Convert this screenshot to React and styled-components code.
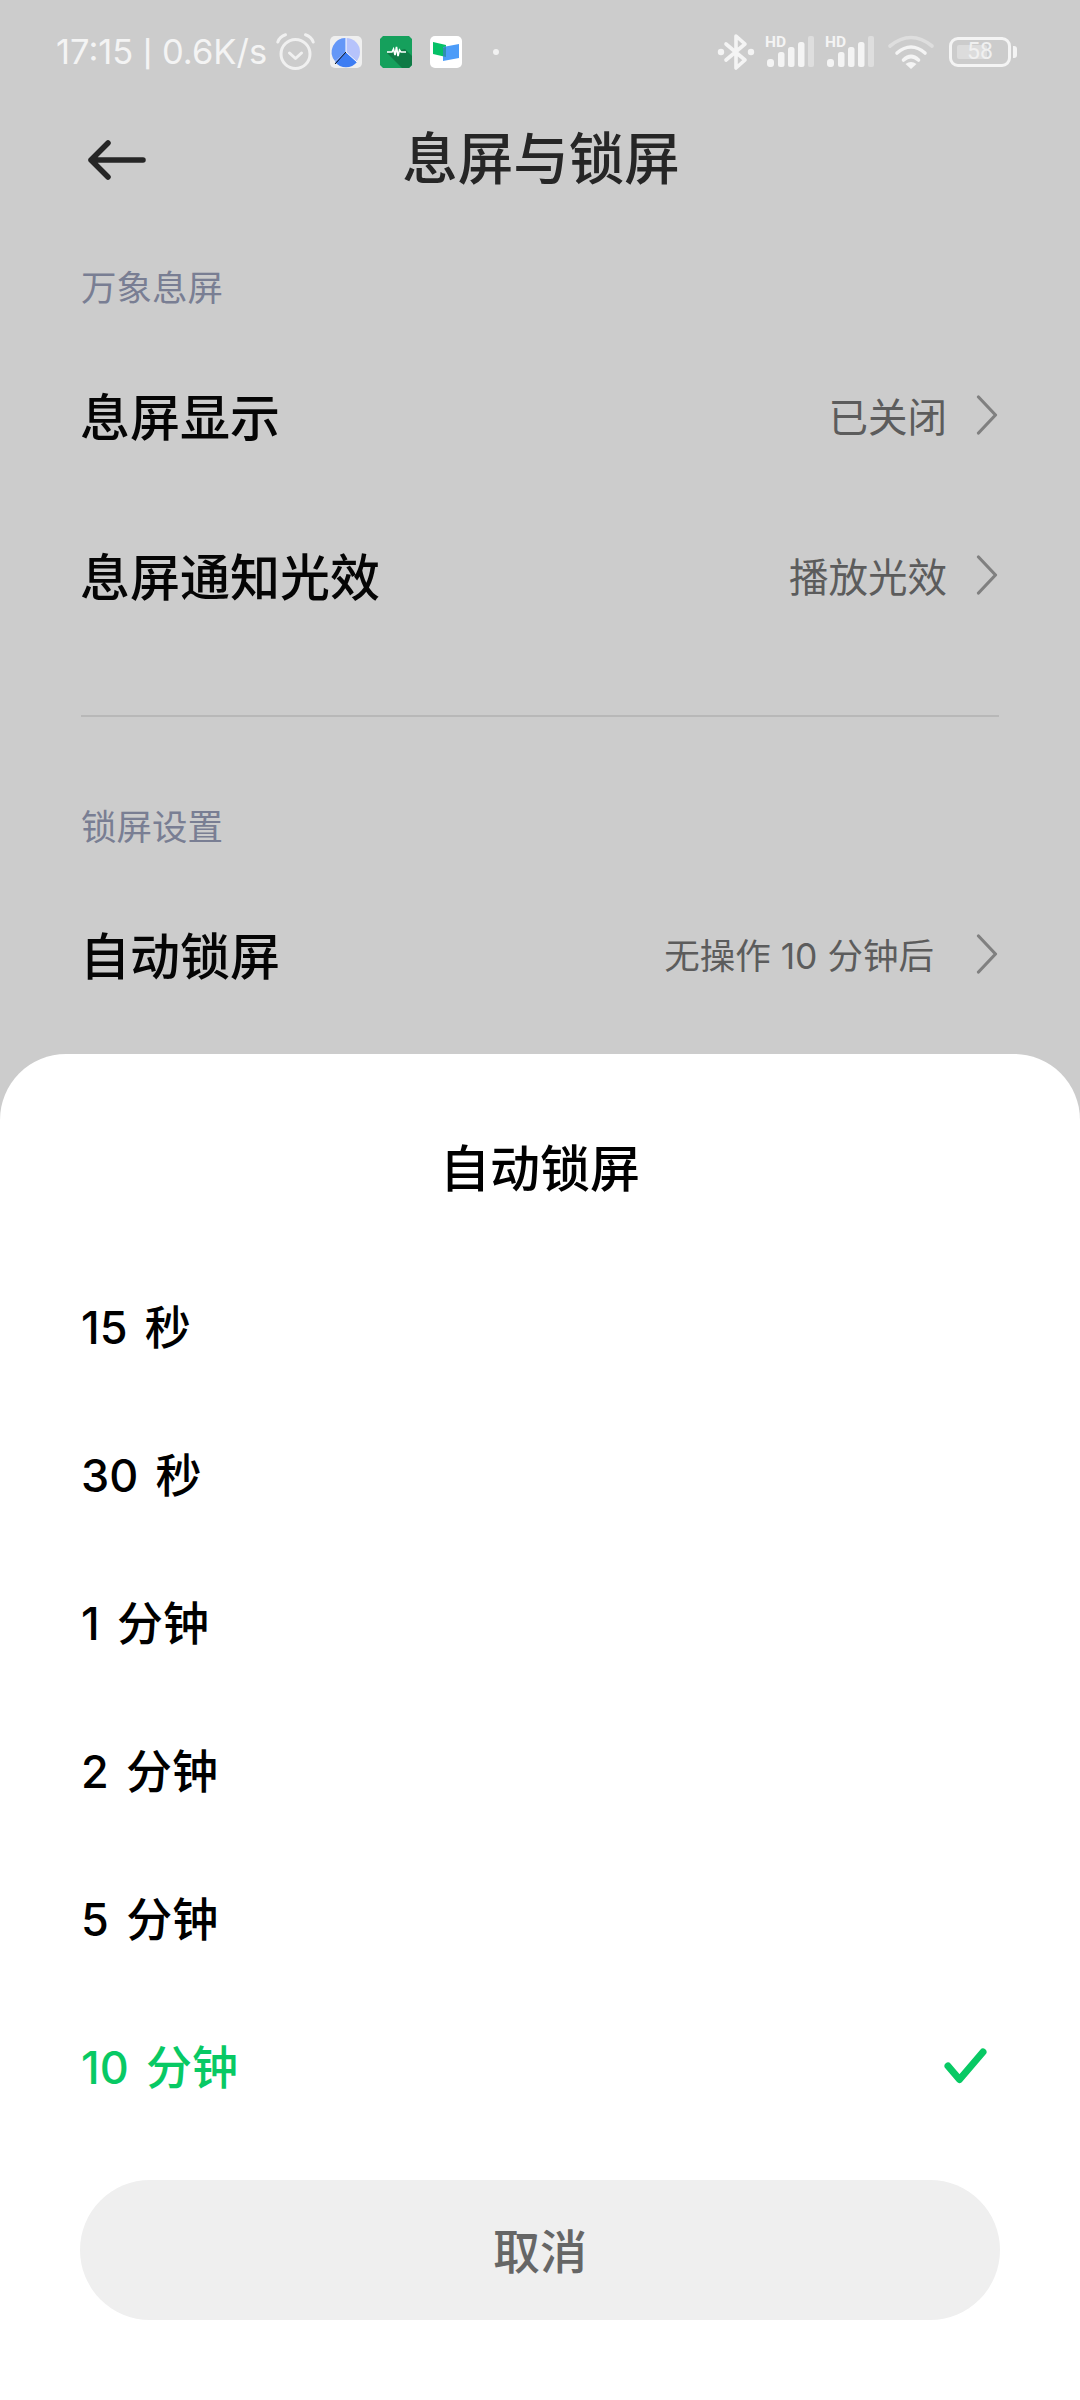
import React from "react";
import styled, { createGlobalStyle } from "styled-components";

const Global = createGlobalStyle`
  html, body { margin: 0; padding: 0; background: #ccc; }
  * { box-sizing: border-box; }
`;
const FONT = `"Noto Sans CJK SC", "Noto Sans", sans-serif`;
const MIXED = `"Inter", "Noto Sans CJK SC", sans-serif`;

const Page = styled.div`
  position: relative; width: 1080px; height: 2400px; overflow: hidden;
  background: #cccccc; font-family: ${FONT};
`;
const StatusBar = styled.div`
  height: 104px; padding: 0 63px 0 56px; display: flex; align-items: center; justify-content: space-between;
`;
const StatusGroup = styled.div`display: flex; align-items: center;`;
const StatusText = styled.span`
  font-family: "Inter", sans-serif; font-size: 34.5px; line-height: 40px; color: #f4f4f4; white-space: nowrap;
`;
const StatusSeparator = styled.span`font-family: "Roboto", sans-serif; font-size: 37px; font-weight: 500; line-height: 40px;`;
const AppIcon = styled.svg`display: block; flex: none; overflow: visible; margin-left: ${p => p.$ml || 0}px;`;
const Header = styled.div`height: 106px; padding: 0 86px 0 88px; display: flex; align-items: center;`;
const HeaderSide = styled.div`width: 58px; flex: none; display: flex; padding-top: ${p => p.$top || 0}px;`;
const HeaderTitle = styled.div`
  flex: 1; text-align: center; font-size: 55.5px; font-weight: 500; line-height: 70px; color: #262626; padding-bottom: 5px;
`;
const Section = styled.section`padding: ${p => p.$top}px 0 0;`;
const SectionLabel = styled.div`
  padding: 0 81px; margin-bottom: 18px; font-size: 35.5px; line-height: 60px; color: #797e93;
`;
const Row = styled.div`
  height: 160px; padding: 0 82px 0 80px; display: flex; align-items: center; justify-content: space-between;
`;
const RowTitle = styled.div`font-size: 50px; font-weight: 500; color: #050505; line-height: 70px;`;
const RowValue = styled.div`display: flex; align-items: center; gap: ${p => p.$gap}px; font-size: ${p => p.$size}px; color: #5c5c5c; font-family: ${MIXED};`;
const Divider = styled.div`height: 2px; margin: 61px 81px 0; background: #b8b8b8;`;

const Sheet = styled.div`
  position: absolute; left: 0; right: 0; bottom: 0; height: 1346px; background: #fff;
  border-radius: 66px 66px 0 0; padding: 0 80px;
`;
const SheetTitle = styled.div`
  height: 198px; padding-top: 78px; text-align: center;
  font-size: 50px; line-height: 66px; font-weight: 500; color: #000;
`;
const OptionList = styled.div`display: flex; flex-direction: column;`;
const Option = styled.div`
  height: 148px; display: flex; align-items: center; justify-content: space-between;
  color: ${p => (p.$active ? "#08c964" : "#000")};
  padding-left: 1px; padding-right: 13px;
`;
const OptionLabel = styled.div`font-size: 46px; word-spacing: 7px; line-height: 60px; white-space: nowrap;`;
const OptionNumber = styled.span`font-family: "Inter", sans-serif; font-size: 45px; font-weight: 500;`;
const OptionUnit = styled.span`font-weight: 500;`;
const CancelButton = styled.div`
  margin-top: 40px; height: 140px; border-radius: 70px; background: #efefef;
  display: flex; align-items: center; justify-content: center; padding-bottom: 4px;
  font-size: 47px; font-weight: 500; color: #666;
`;
const ChevronIcon = styled.svg`display: block; flex: none; margin-top: 2px;`;

const Chevron = () => (
  <ChevronIcon width="22" height="40" viewBox="0 0 22 40" fill="none"><path d="M2.5 2 L19.5 20 L2.5 38" stroke="#808080" strokeWidth="3.2" strokeLinecap="round" strokeLinejoin="round" /></ChevronIcon>
);
const Back = () => (
  <svg width="58" height="40" viewBox="0 0 58 40" fill="none"><path d="M20 3 L3 20 L20 37 M3 20 H55" stroke="#262626" strokeWidth="5.5" strokeLinecap="round" strokeLinejoin="round" /></svg>
);
const Alarm = () => (
  <AppIcon $ml={9} width="39" height="38" viewBox="0 0 39 38" fill="none" stroke="#f0f0f0">
    <circle cx="19.5" cy="21" r="14.5" strokeWidth="3" />
    <path d="M13.5 20 L19.5 25.5 L25.5 20" strokeWidth="3" strokeLinecap="round" strokeLinejoin="round" />
    <path d="M1.8 9 Q4 3.5 9.5 1.8 M29.5 1.8 Q35 3.5 37.2 9" strokeWidth="3" strokeLinecap="round" />
  </AppIcon>
);
const ClockApp = () => (
  <AppIcon $ml={15} width="32" height="32" viewBox="0 0 32 32">
    <rect width="32" height="32" rx="5" fill="#efefef" />
    <circle cx="16" cy="16" r="14" fill="#b6c3fb" />
    <path d="M16 16 L16 2 A14 14 0 0 0 5 25 Z" fill="#6497f7" />
    <path d="M16 16 L5 26 A14 14 0 0 0 27 26 Z" fill="#3d7df3" />
    <path d="M16 2 V16 L27 26" stroke="#fff" strokeWidth="1" fill="none" />
    <path d="M16 16 L5 28" stroke="#111" strokeWidth="1" fill="none" />
  </AppIcon>
);
const PulseApp = () => (
  <AppIcon $ml={18} width="32" height="32" viewBox="0 0 32 32">
    <path d="M3 0 H29 L32 3 V29 L29 32 H3 L0 29 V3 Z" fill="#15a05c" />
    <path d="M7 17 L25 13 L32 20 V29 L29 32 H22 Z" fill="#0e7a45" />
    <path d="M7 16 H12 L13.5 13 L15 19 L16.5 11 L18 20 L19.5 14 L21 16 H26" stroke="#fff" strokeWidth="1.6" fill="none" />
  </AppIcon>
);
const BookApp = () => (
  <AppIcon $ml={18} width="32" height="32" viewBox="0 0 32 32">
    <rect width="32" height="32" rx="5" fill="#fff" />
    <path d="M3 6 L16 9 V21 L3 18 Z" fill="#06c167" />
    <path d="M13 11 L29 8 V22 L13 25 Z" fill="#4c9cf8" />
    <path d="M13 11.5 L16 11 V21 L13 20.3 Z" fill="#2f8fb0" />
  </AppIcon>
);
const Dot = () => (
  <AppIcon $ml={31} width="6" height="6" viewBox="0 0 6 6"><circle cx="3" cy="3" r="3" fill="#f2f2f2" /></AppIcon>
);
const Bluetooth = () => (
  <AppIcon width="36" height="38" viewBox="0 0 36 38" fill="none" stroke="#f4f4f4" strokeWidth="3.6" strokeLinecap="round" strokeLinejoin="round">
    <path d="M8 11 L27 27 L18 35 V3 L27 11 L8 27" />
    <circle cx="3" cy="19" r="1.4" fill="#f4f4f4" />
    <circle cx="33" cy="19" r="1.4" fill="#f4f4f4" />
  </AppIcon>
);
const HdLabel = styled.text`font-family: "Roboto", sans-serif; font-size: 15.5px; font-weight: 700; fill: #f4f4f4;`;
const Signal = ({ ml }) => (
  <AppIcon $ml={ml} width="50" height="32" viewBox="0 0 50 32">
    <HdLabel x="0" y="11">HD</HdLabel>
    <rect x="2" y="23" width="7" height="8" rx="3" fill="#f4f4f4" />
    <rect x="13" y="16" width="6.5" height="15" rx="2.5" fill="#f4f4f4" />
    <rect x="23" y="11" width="6.5" height="20" rx="2.5" fill="#f4f4f4" />
    <rect x="33" y="6" width="6.5" height="25" rx="2.5" fill="#f4f4f4" />
    <rect x="43" y="0" width="6" height="31" rx="2" fill="#dedede" />
  </AppIcon>
);
const Wifi = ({ ml }) => (
  <AppIcon $ml={ml} width="46" height="34" viewBox="0 0 46 34" fill="none" strokeLinecap="round">
    <path d="M2 11 Q23 -6 44 11" stroke="#dedede" strokeWidth="3.6" />
    <path d="M9 18 Q23 6 37 18" stroke="#f4f4f4" strokeWidth="3.6" />
    <path d="M15.5 25 Q23 18 30.5 25" stroke="#f4f4f4" strokeWidth="3.6" />
    <path d="M23 34 L17.5 29 Q23 25 28.5 29 Z" fill="#f4f4f4" />
  </AppIcon>
);
const BatteryBox = styled.div`
  position: relative; width: 62px; height: 30px; border: 3px solid #f4f4f4; border-radius: 9px;
  display: flex; align-items: center; justify-content: center; margin: 0 6px 0 15px;
  &::before { content: ""; position: absolute; left: 5px; top: 5px; bottom: 5px; width: 30px; background: #dcdcdc; border-radius: 2px; }
  &::after { content: ""; position: absolute; right: -9px; top: 6px; width: 4px; height: 12px; background: #f4f4f4; border-radius: 0 3px 3px 0; }
`;
const BatteryText = styled.span`position: relative; font-family: "Roboto", sans-serif; font-size: 23px; line-height: 24px; color: #f0f0f0;`;
const Check = () => (
  <svg width="43" height="36" viewBox="0 0 43 36" fill="none"><path d="M4 18 L15.5 31.5 L39 4" stroke="#08c964" strokeWidth="7" strokeLinecap="round" strokeLinejoin="round" /></svg>
);

const OPTIONS = [["15", "秒"], ["30", "秒"], ["1", "分钟"], ["2", "分钟"], ["5", "分钟"], ["10", "分钟"]];

export default function App() {
  return (
    <Page>
      <Global />
      <StatusBar>
        <StatusGroup>
          <StatusText>17:15 <StatusSeparator>|</StatusSeparator> 0.6K/s</StatusText>
          <Alarm /><ClockApp /><PulseApp /><BookApp /><Dot />
        </StatusGroup>
        <StatusGroup>
          <Bluetooth /><Signal ml={11} /><Signal ml={10} /><Wifi ml={13} /><BatteryBox><BatteryText>58</BatteryText></BatteryBox>
        </StatusGroup>
      </StatusBar>
      <Header>
        <HeaderSide $top={6}><Back /></HeaderSide>
        <HeaderTitle>息屏与锁屏</HeaderTitle>
        <HeaderSide />
      </Header>
      <Section $top={46}>
        <SectionLabel>万象息屏</SectionLabel>
        <Row><RowTitle>息屏显示</RowTitle><RowValue $size={39.5} $gap={29}>已关闭<Chevron /></RowValue></Row>
        <Row><RowTitle>息屏通知光效</RowTitle><RowValue $size={39.5} $gap={29}>播放光效<Chevron /></RowValue></Row>
      </Section>
      <Divider />
      <Section $top={78}>
        <SectionLabel>锁屏设置</SectionLabel>
        <Row><RowTitle>自动锁屏</RowTitle><RowValue $size={35.5} $gap={42}>无操作 10 分钟后<Chevron /></RowValue></Row>
      </Section>
      <Sheet>
        <SheetTitle>自动锁屏</SheetTitle>
        <OptionList>
          {OPTIONS.map(([n, u], i) => {
            const active = i === OPTIONS.length - 1;
            return (
              <Option key={n} $active={active}>
                <OptionLabel><OptionNumber>{n}</OptionNumber> <OptionUnit>{u}</OptionUnit></OptionLabel>
                {active && <Check />}
              </Option>
            );
          })}
        </OptionList>
        <CancelButton>取消</CancelButton>
      </Sheet>
    </Page>
  );
}
